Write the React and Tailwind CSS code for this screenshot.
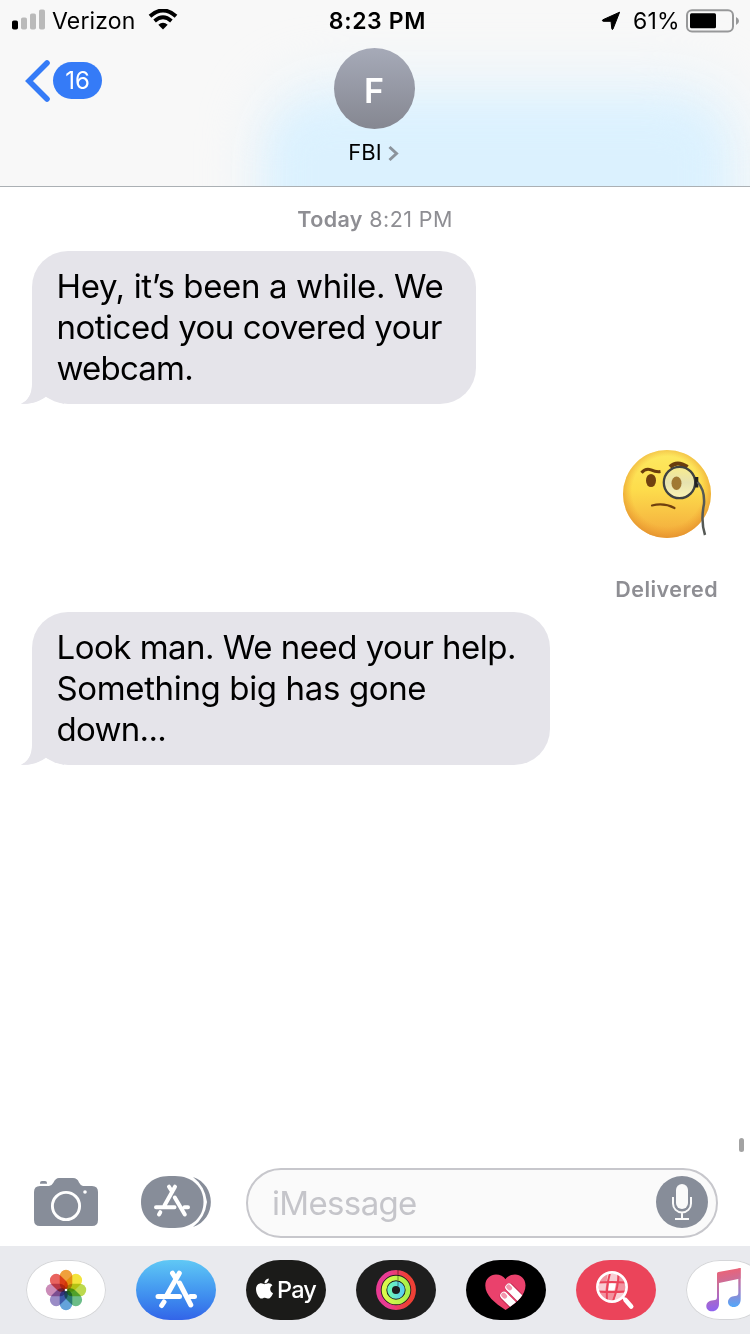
import React from "react";
import { FaApple } from "react-icons/fa";

function StatusBar() {
  return (
    <div className="relative grid h-[41px] grid-cols-3 items-center text-black">
      <div className="flex items-center pl-[12px]">
        <svg width="34" height="22" viewBox="0 0 34 22" className="-mt-px">
          <rect x="0" y="11.5" width="6" height="9" rx="1.8" fill="#000" />
          <rect x="9" y="8.5" width="6" height="12" rx="1.8" fill="#bababa" />
          <rect x="18" y="4.5" width="6" height="16" rx="1.8" fill="#bababa" />
          <rect x="27" y="0.5" width="6" height="20" rx="1.8" fill="#bababa" />
        </svg>
        <span className="ml-[6px] mt-px w-[85px] text-[23px] leading-[28px] tracking-[0.15px]">Verizon</span>
        <svg className="-mt-px ml-[11px]" width="30" height="22" viewBox="0 0 30 22">
          <path d="M2 7.2Q15-4.2 28 7.2" fill="none" stroke="#000" strokeWidth="4" />
          <path d="M6.6 12Q15 4.6 23.4 12" fill="none" stroke="#000" strokeWidth="3.8" />
          <path d="M10.3 15.8Q15 11.7 19.7 15.8L15 20.5Z" fill="#000" />
        </svg>
      </div>
      <div className="pl-[5px] pt-px text-center text-[23px] font-semibold leading-[28px] tracking-[0.65px]">8:23 PM</div>
      <div className="flex items-center justify-end pr-[9px]">
        <svg width="20" height="20" viewBox="0 0 20 20">
          <path d="M18.6 1.2 12 18Q11.200 19.200 10.800 17.800L10 10.300H2.200Q0.600 9.800 1.800 8.800Z" fill="#000" stroke="#000" strokeLinejoin="round" />
        </svg>
        <span className="ml-[12px] mt-px w-[49px] whitespace-nowrap text-[23px] leading-[28px] tracking-[0.2px]">61%</span>
        <svg className="ml-[4px]" width="55" height="24" viewBox="0 0 55 24">
          <rect x="1" y="1.2" width="46" height="21.2" rx="5" fill="none" stroke="#979899" strokeWidth="2" />
          <rect x="4" y="4.2" width="26" height="15" rx="1.5" fill="#000" />
          <path d="M50 8Q53 9.4 53 12T50 16Z" fill="#979899" />
        </svg>
      </div>
    </div>
  );
}

function Header() {
  return (
    <header className="relative h-[187px] shrink-0 overflow-hidden border-b border-[#abb0b4] bg-[#f8f8f8]">
      <div className="absolute left-[265px] top-[85px] h-[200px] w-[475px] rounded-[60px] bg-[#e1f3fe] blur-[30px]" />
      <div className="absolute left-[275px] top-[112px] h-[150px] w-[440px] rounded-[40px] bg-[#dbf1fe] blur-[18px]" />
      <StatusBar />
      <div className="relative -mt-px grid grid-cols-3">
        <div className="flex h-[81px] items-center pl-[25px]">
          <svg width="26" height="44" viewBox="0 0 26 44">
            <path d="M22 4 4 22 22 40" fill="none" stroke="#357bf7" strokeWidth="5.600" strokeLinecap="round" />
          </svg>
          <span className="ml-[2px] flex h-[37px] w-[49px] items-center justify-center rounded-full bg-[#357bf7] text-[24px] text-white">
            16
          </span>
        </div>
        <div className="flex flex-col items-center pr-[2px] pt-[8px]">
          <div className="flex h-[81px] w-[81px] items-center justify-center rounded-full bg-gradient-to-b from-[#a6aab8] to-[#858791] pt-[3px] text-[34px] font-semibold text-white">
            F
          </div>
          <div className="mt-[8px] flex items-center">
            <span className="text-[22px] leading-[30px]">FBI</span>
            <svg className="ml-[5px] mt-[2px]" width="13" height="17" viewBox="0 0 13 17">
              <path d="M2.5 2 9.5 8.5 2.5 15" fill="none" stroke="#8b939b" strokeWidth="3" />
            </svg>
          </div>
        </div>
      </div>
    </header>
  );
}

function Bubble({ width, lines }) {
  return (
    <div className={"relative ml-[32px] h-[153px] rounded-[36px] bg-[#e5e4ea] pl-[24.5px] pt-[15px] " + width}>
      <svg className="absolute -left-[12px] bottom-0" width="44" height="36" viewBox="0 0 44 36">
        <path d="M12 0V18C12 26 8 33 1 35.700 11 36.500 19 33.500 25.500 28.800L44 36V0Z" fill="#e5e4ea" />
        <path d="M1 36Q14 36.500 25.500 29 30 33 39 36Z" fill="#fff" />
        <path d="M12 16C12 26 8 33 1 35.700 11 36.500 19 33.500 25.500 29L25 16Z" fill="#e5e4ea" />
      </svg>
      {lines.map((l) => (
        <p key={l.text} className={"relative whitespace-nowrap text-[33px] leading-[41px] text-black " + l.track}>
          {l.text}
        </p>
      ))}
    </div>
  );
}

function MonocleFace() {
  return (
    <svg width="90" height="90" viewBox="0 0 90 90">
      <defs>
        <linearGradient id="face" x1="0" y1="0" x2="0" y2="1">
          <stop offset="0" stopColor="#fdea62" />
          <stop offset="0.450" stopColor="#fddc4c" />
          <stop offset="1" stopColor="#f3a93c" />
        </linearGradient>
        <radialGradient id="rim" cx="0.5" cy="0.470" r="0.530">
          <stop offset="0.750" stopColor="#ee972b" stopOpacity="0" />
          <stop offset="1" stopColor="#e08c2a" stopOpacity="0.700" />
        </radialGradient>
        <linearGradient id="lens" x1="0" y1="0" x2="0" y2="1">
          <stop offset="0" stopColor="#f8ec8c" />
          <stop offset="0.500" stopColor="#e6e2b0" />
          <stop offset="1" stopColor="#fcf4b4" />
        </linearGradient>
      </defs>
      <circle cx="45" cy="45" r="44" fill="url(#face)" />
      <circle cx="45" cy="45" r="44" fill="url(#rim)" />
      <path d="M19.500 23.800Q23.500 18.800 29 20.800 34 23.300 38.500 22.600" fill="none" stroke="#6a3c0d" strokeWidth="3" />
      <path d="M48 18Q55 11 65.500 18" fill="none" stroke="#6a3c0d" strokeWidth="4" />
      <ellipse cx="29" cy="31.500" rx="5" ry="6.600" fill="#70400f" />
      <circle cx="57.500" cy="33.500" r="15.700" fill="url(#lens)" stroke="#3f4242" strokeWidth="2.300" />
      <ellipse cx="54.500" cy="34.300" rx="5" ry="6.700" fill="#a17933" />
      <path d="M30 56.500Q42 53.500 52.500 59" fill="none" stroke="#70400f" strokeWidth="2.200" strokeLinecap="round" />
      <path d="M74.500 28V38.500" fill="none" stroke="#222" strokeWidth="3.600" />
      <path d="M75.500 33Q83 41 82 55 78.500 72 83 86" fill="none" stroke="#555955" strokeWidth="2.500" />
    </svg>
  );
}

function CameraIcon() {
  return (
    <svg width="64" height="50" viewBox="0 0 64 50">
      <path d="M6 4.800Q6 3 8 3H11Q13 3 13 4.800V5.800H6Z" fill="#878d99" />
      <path d="M6 8H15Q18 7.500 19.500 4.500 21.500 0 25 0H39Q43.500 0 45 4.500 46.500 7.500 49 8H58Q64 8 64 14V42Q64 48 58 48H6Q0 48 0 42V14Q0 8 6 8Z" fill="#878d99" />
      <circle cx="32" cy="28" r="13.600" fill="none" stroke="#fff" strokeWidth="2.900" />
      <circle cx="51" cy="14" r="1.800" fill="#fff" />
    </svg>
  );
}

function DrawerIcon() {
  return (
    <svg width="70" height="52" viewBox="0 0 70 52">
      <path d="M52 1C75.800 9 75.800 43 52 51Q64 42 66 26 64 10 52 1Z" fill="#878d99" />
      <path d="M28 0H34C51 0 62.500 11 62.500 26S51 52 34 52H28C11 52 0 41 0 26S11 0 28 0Z" fill="#878d99" />
      <g fill="none" stroke="#fff" strokeWidth="4" strokeLinecap="round">
        <path d="M34 10.700 23.500 29.500M28 10.700 31 15.500M15 31.200H33.500M43.500 31.200H47M33.800 21.500 43.800 38.500M19.300 36.200 18 38.500" />
      </g>
    </svg>
  );
}

function Composer() {
  return (
    <div className="flex h-[78px] shrink-0 items-start bg-white pl-[34px]">
      <div className="mt-[10px] w-[107px]">
        <CameraIcon />
      </div>
      <div className="mt-[8px] w-[105px]">
        <DrawerIcon />
      </div>
      <div className="flex h-[70px] w-[472px] items-center justify-between rounded-full border-2 border-[#c7c7cc] bg-[#fafafa] pl-[24px] pr-[8px]">
        <span className="pt-[2px] text-[33px] tracking-[-0.650px] text-[#c5c5ca]">iMessage</span>
        <svg width="52" height="52" viewBox="0 0 52 52" className="-mt-[2px]">
          <circle cx="26" cy="26" r="26" fill="#878d99" />
          <rect x="20" y="8" width="12" height="25" rx="6" fill="#fafafa" />
          <path d="M17 21V27.500A9 9 0 0 0 35 27.500V21M26 36.500V43M19 43H33" fill="none" stroke="#fafafa" strokeWidth="2" />
        </svg>
      </div>
    </div>
  );
}

const petals = ["#f0a03c", "#f3e43c", "#bcd94e", "#6cbd88", "#64a3da", "#9a8cc6", "#cb8cb8", "#e9635f"];

function PhotosArt() {
  return (
    <svg width="80" height="60" viewBox="0 0 80 60">
      <g className="isolate">
        {petals.map((c, i) => (
          <rect
            key={c}
            x="33.700"
            y="9.800"
            width="12.600"
            height="20.200"
            rx="6.300"
            fill={c}
            transform={`rotate(${i * 45} 40 30)`}
            className="mix-blend-multiply"
          />
        ))}
      </g>
      <circle cx="40" cy="30" r="1.300" fill="#fff" />
    </svg>
  );
}

function StoreArt() {
  return (
    <svg width="80" height="60" viewBox="0 0 80 60">
      <path
        d="M43.300 13.200 31 35M36.500 13.200 39.500 18M22 36.500H43.500M54.500 36.500H58.500M43.500 23 54.800 45M28 42 25.700 45.500"
        fill="none"
        stroke="#fff"
        strokeWidth="5"
        strokeLinecap="round"
      />
    </svg>
  );
}

function ActivityArt() {
  return (
    <svg width="80" height="60" viewBox="0 0 80 60">
      <defs>
        <linearGradient id="move" x1="0" y1="0" x2="1" y2="0">
          <stop offset="0.300" stopColor="#e93b93" />
          <stop offset="0.800" stopColor="#ee4036" />
        </linearGradient>
        <linearGradient id="exercise" x1="0" y1="0" x2="1" y2="0">
          <stop offset="0" stopColor="#dcfb4c" />
          <stop offset="1" stopColor="#a9f04a" />
        </linearGradient>
        <linearGradient id="stand" x1="0" y1="0" x2="1" y2="0">
          <stop offset="0" stopColor="#6cf9b6" />
          <stop offset="1" stopColor="#5bd0ee" />
        </linearGradient>
      </defs>
      <g fill="none" strokeWidth="4.700">
        <circle cx="40" cy="30" r="17.600" stroke="url(#move)" />
        <circle cx="40" cy="30" r="12" stroke="url(#exercise)" />
        <circle cx="40" cy="30" r="6.400" stroke="url(#stand)" />
      </g>
      <path d="M42 10V14.700M42 15.700V20.400M42 21.500V26" stroke="#000" strokeOpacity="0.300" strokeWidth="1.500" />
    </svg>
  );
}

function TouchArt() {
  return (
    <svg width="80" height="60" viewBox="0 0 80 60">
      <defs>
        <clipPath id="heart">
          <path d="M39.500 50C29 43 19.300 35.500 19.300 25.500 19.300 18.500 24.500 14.500 30 14.500 34 14.500 37.500 16.300 39.500 19.300 41.500 16.300 45 14.500 49 14.500 54.500 14.500 59.500 18.500 59.500 25.500 59.500 35.500 50 43 39.500 50Z" />
        </clipPath>
      </defs>
      <g clipPath="url(#heart)">
        <rect width="80" height="60" fill="#ea416c" />
        <g strokeLinecap="round">
          <path d="M38 36 53 51M43.500 27.500 63 47" stroke="#c52d54" strokeWidth="9" />
          <path d="M38 35.500 53 50.500M43 27.300 62 46.300" stroke="#fff" strokeWidth="7.500" />
          <path d="M37.500 35 38.800 36.300M42.500 26.800 43.800 28.100" stroke="#f395ad" strokeWidth="4.600" />
        </g>
      </g>
    </svg>
  );
}

function SearchArt() {
  return (
    <svg width="80" height="60" viewBox="0 0 80 60">
      <circle cx="36" cy="27" r="13.500" fill="#f2929f" />
      <path d="M31.500 14H42L41 22H30.500ZM23 23H30.500L29 31.500H23ZM41 31.500H49L43 40H38Z" fill="#f8ced4" />
      <path d="M33 23.300H40L38.500 30.500H32Z" fill="#fff" />
      <path d="M22 22.500Q36 21.500 50 22.500M22 31.500Q36 32.500 50 31.500M34 13Q30 27 31 41M42.500 13Q42.500 27 37 41" fill="none" stroke="#eb445a" strokeWidth="2" />
      <circle cx="36" cy="27" r="14.600" fill="none" stroke="#fff" strokeWidth="2.700" />
      <path d="M46.500 37 50 40.500" stroke="#fff" strokeWidth="2.500" />
      <path d="M49.500 40 55.200 46.500" stroke="#fff" strokeWidth="4.600" strokeLinecap="round" />
    </svg>
  );
}

function MusicArt() {
  return (
    <svg width="80" height="60" viewBox="0 0 80 60">
      <defs>
        <linearGradient id="note" x1="0.350" y1="0" x2="0.500" y2="1">
          <stop offset="0" stopColor="#f3606e" />
          <stop offset="0.400" stopColor="#c66f9e" />
          <stop offset="1" stopColor="#8a62f7" />
        </linearGradient>
        <linearGradient id="noteRight" x1="0" y1="0" x2="0" y2="1">
          <stop offset="0" stopColor="#ec6275" />
          <stop offset="0.550" stopColor="#a47fc4" />
          <stop offset="1" stopColor="#52a8fb" />
        </linearGradient>
      </defs>
      <path d="M31 13.500Q31 12.200 32.500 12L54.500 8V18.500L33 23V44C33 48.500 30 51.300 26 51.300 22.500 51.300 20.300 49 20.300 46.200 20.300 42.800 23.300 40.500 27.500 40.300 30 40.200 31 39.500 31 37Z" fill="url(#note)" />
      <path d="M52.300 8.400 54.700 8V39C54.700 44.500 51.500 47 47.700 47 44.300 47 42 44.800 42 42 42 38.500 45 36.300 49 36 51.300 35.800 52.300 35 52.300 33Z" fill="url(#noteRight)" />
    </svg>
  );
}

function AppPill({ tone, children }) {
  return (
    <div className={"flex h-[60px] w-[80px] shrink-0 items-center justify-center overflow-hidden rounded-[34px/30px] " + tone}>
      {children}
    </div>
  );
}

function AppStrip() {
  return (
    <nav className="flex h-[88px] shrink-0 items-start gap-[30px] overflow-hidden bg-[#e9eaee] pl-[26px] pt-[14px]">
      <AppPill tone="bg-white shadow-[inset_0_0_0_1px_#d5d6d9]"><PhotosArt /></AppPill>
      <AppPill tone="bg-gradient-to-b from-[#60c8f5] to-[#3364e8]"><StoreArt /></AppPill>
      <AppPill tone="bg-[#1b1b19]">
        <FaApple className="-mt-[4px] h-[21px] w-[17px] scale-110 text-white" />
        <span className="ml-[4px] text-[23.5px] font-medium leading-[30px] tracking-[-0.8px] text-white">Pay</span>
      </AppPill>
      <AppPill tone="bg-[#1e1e1e]"><ActivityArt /></AppPill>
      <AppPill tone="bg-black"><TouchArt /></AppPill>
      <AppPill tone="bg-[#eb445a]"><SearchArt /></AppPill>
      <AppPill tone="bg-white shadow-[inset_0_0_0_1px_#d5d6d9]"><MusicArt /></AppPill>
    </nav>
  );
}

const first = [
  { text: "Hey, it’s been a while. We", track: "tracking-[-0.37px]" },
  { text: "noticed you covered your", track: "tracking-[-0.5px]" },
  { text: "webcam.", track: "tracking-[-0.8px]" },
];

const second = [
  { text: "Look man. We need your help.", track: "tracking-[-0.5px]" },
  { text: "Something big has gone", track: "tracking-[-0.36px]" },
  { text: "down...", track: "tracking-[-0.7px]" },
];

export default function App() {
  return (
    <div className="flex h-[1334px] w-[750px] flex-col overflow-hidden bg-white font-['Inter','Liberation_Sans',sans-serif]">
      <Header />
      <main className="relative min-h-0 flex-1">
        <div className="pt-[18px] text-center text-[21.5px] leading-[28px] tracking-[0.4px] text-[#8e8e93]">
          <span className="font-semibold">Today</span> 8:21 PM
        </div>
        <div className="pt-[18px]">
          <Bubble width="w-[444px]" lines={first} />
        </div>
        <div className="flex h-[208px] flex-col items-end pr-[32px] pt-[45px]">
          <div className="pr-[6px]">
            <MonocleFace />
          </div>
          <div className="mt-[36px] text-[21.5px] font-semibold leading-[28px] tracking-[0.45px] text-[#8e8e93]">Delivered</div>
        </div>
        <Bubble width="w-[518px]" lines={second} />
        <div className="absolute bottom-[16px] right-[6px] h-[14px] w-[5px] rounded-full bg-[#a3a3a3]" />
      </main>
      <Composer />
      <AppStrip />
    </div>
  );
}
